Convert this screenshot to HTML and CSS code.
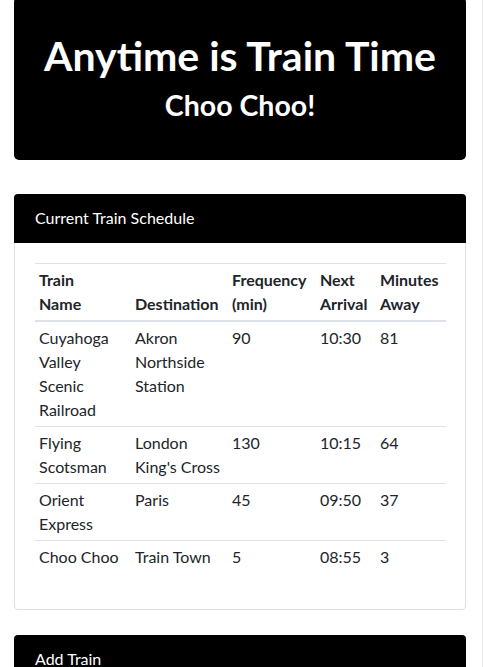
FILE: index.html
```html
<!DOCTYPE html>
<html lang="en">
<head>
<meta charset="utf-8">
<title>Anytime is Train Time</title>
<link rel="stylesheet" href="styles.css">
</head>
<body>
<div class="page">
  <header class="jumbotron">
    <h1 class="title">Anytime is Train Time</h1>
    <h3 class="subtitle">Choo Choo!</h3>
  </header>

  <section class="card">
    <div class="card-header">Current Train Schedule</div>
    <div class="card-body">
      <table class="schedule">
        <colgroup>
          <col class="c-name">
          <col class="c-dest">
          <col class="c-freq">
          <col class="c-next">
          <col class="c-min">
        </colgroup>
        <thead>
          <tr>
            <th>Train Name</th>
            <th>Destination</th>
            <th>Frequency (min)</th>
            <th>Next Arrival</th>
            <th>Minutes Away</th>
          </tr>
        </thead>
        <tbody>
          <tr>
            <td>Cuyahoga Valley Scenic Railroad</td>
            <td>Akron Northside Station</td>
            <td>90</td>
            <td>10:30</td>
            <td>81</td>
          </tr>
          <tr>
            <td>Flying Scotsman</td>
            <td>London King's Cross</td>
            <td>130</td>
            <td>10:15</td>
            <td>64</td>
          </tr>
          <tr>
            <td>Orient Express</td>
            <td>Paris</td>
            <td>45</td>
            <td>09:50</td>
            <td>37</td>
          </tr>
          <tr>
            <td>Choo Choo</td>
            <td>Train Town</td>
            <td>5</td>
            <td>08:55</td>
            <td>3</td>
          </tr>
        </tbody>
      </table>
    </div>
  </section>

  <section class="card card-add">
    <div class="card-header">Add Train</div>
    <div class="card-body">
      <div class="spacer"></div>
    </div>
  </section>
</div>
</body>
</html>
```
FILE: styles.css
```css
html, body {
  margin: 0;
  padding: 0;
  background: #fff;
}
body {
  font-family: Lato, "Liberation Sans", sans-serif;
  font-size: 16px;
  line-height: 24px;
  color: #212529;
  overflow: hidden;
}
.page {
  width: 452px;
  min-height: 667px;
  padding: 0 16px 0 14px;
  border-right: 1px solid #e6e6e6;
  box-sizing: content-box;
}
.jumbotron {
  background: #000;
  color: #fff;
  border-radius: 5px;
  margin-top: -3px;
  padding: 35px 16px 30px;
  text-align: center;
  margin-bottom: 34px;
}
.title {
  margin: 0 0 8px;
  font-size: 41px;
  line-height: 48px;
  font-weight: 700;
}
.subtitle {
  margin: 0 0 8px;
  font-size: 28.5px;
  line-height: 34px;
  font-weight: 700;
}
.card {
  border: 1px solid #dfdfdf;
  border-radius: 4px;
  margin-bottom: 25px;
}
.card-header {
  background: #000;
  color: #fff;
  padding: 12px 21px 13px;
  line-height: 24px;
  margin: -1px -1px 0;
  border-radius: 4px 4px 0 0;
}
.card-body {
  padding: 20px;
}
.schedule {
  width: 411px;
  table-layout: fixed;
  border-collapse: collapse;
  margin-bottom: 16px;
}
.c-name { width: 96px; }
.c-dest { width: 97px; }
.c-freq { width: 88px; }
.c-next { width: 60px; }
.c-min { width: 70px; }
.schedule th,
.schedule td {
  padding: 4px;
  text-align: left;
  vertical-align: bottom;
  border-top: 1px solid #dee2e6;
}
.schedule th {
  font-weight: 700;
  border-bottom: 2px solid #dee2e6;
}
.schedule td {
  vertical-align: top;
}
.schedule tbody tr:first-child td {
  border-top: 0;
}
.schedule th:first-child {
  padding-right: 11px;
}
.spacer {
  height: 60px;
}
```
